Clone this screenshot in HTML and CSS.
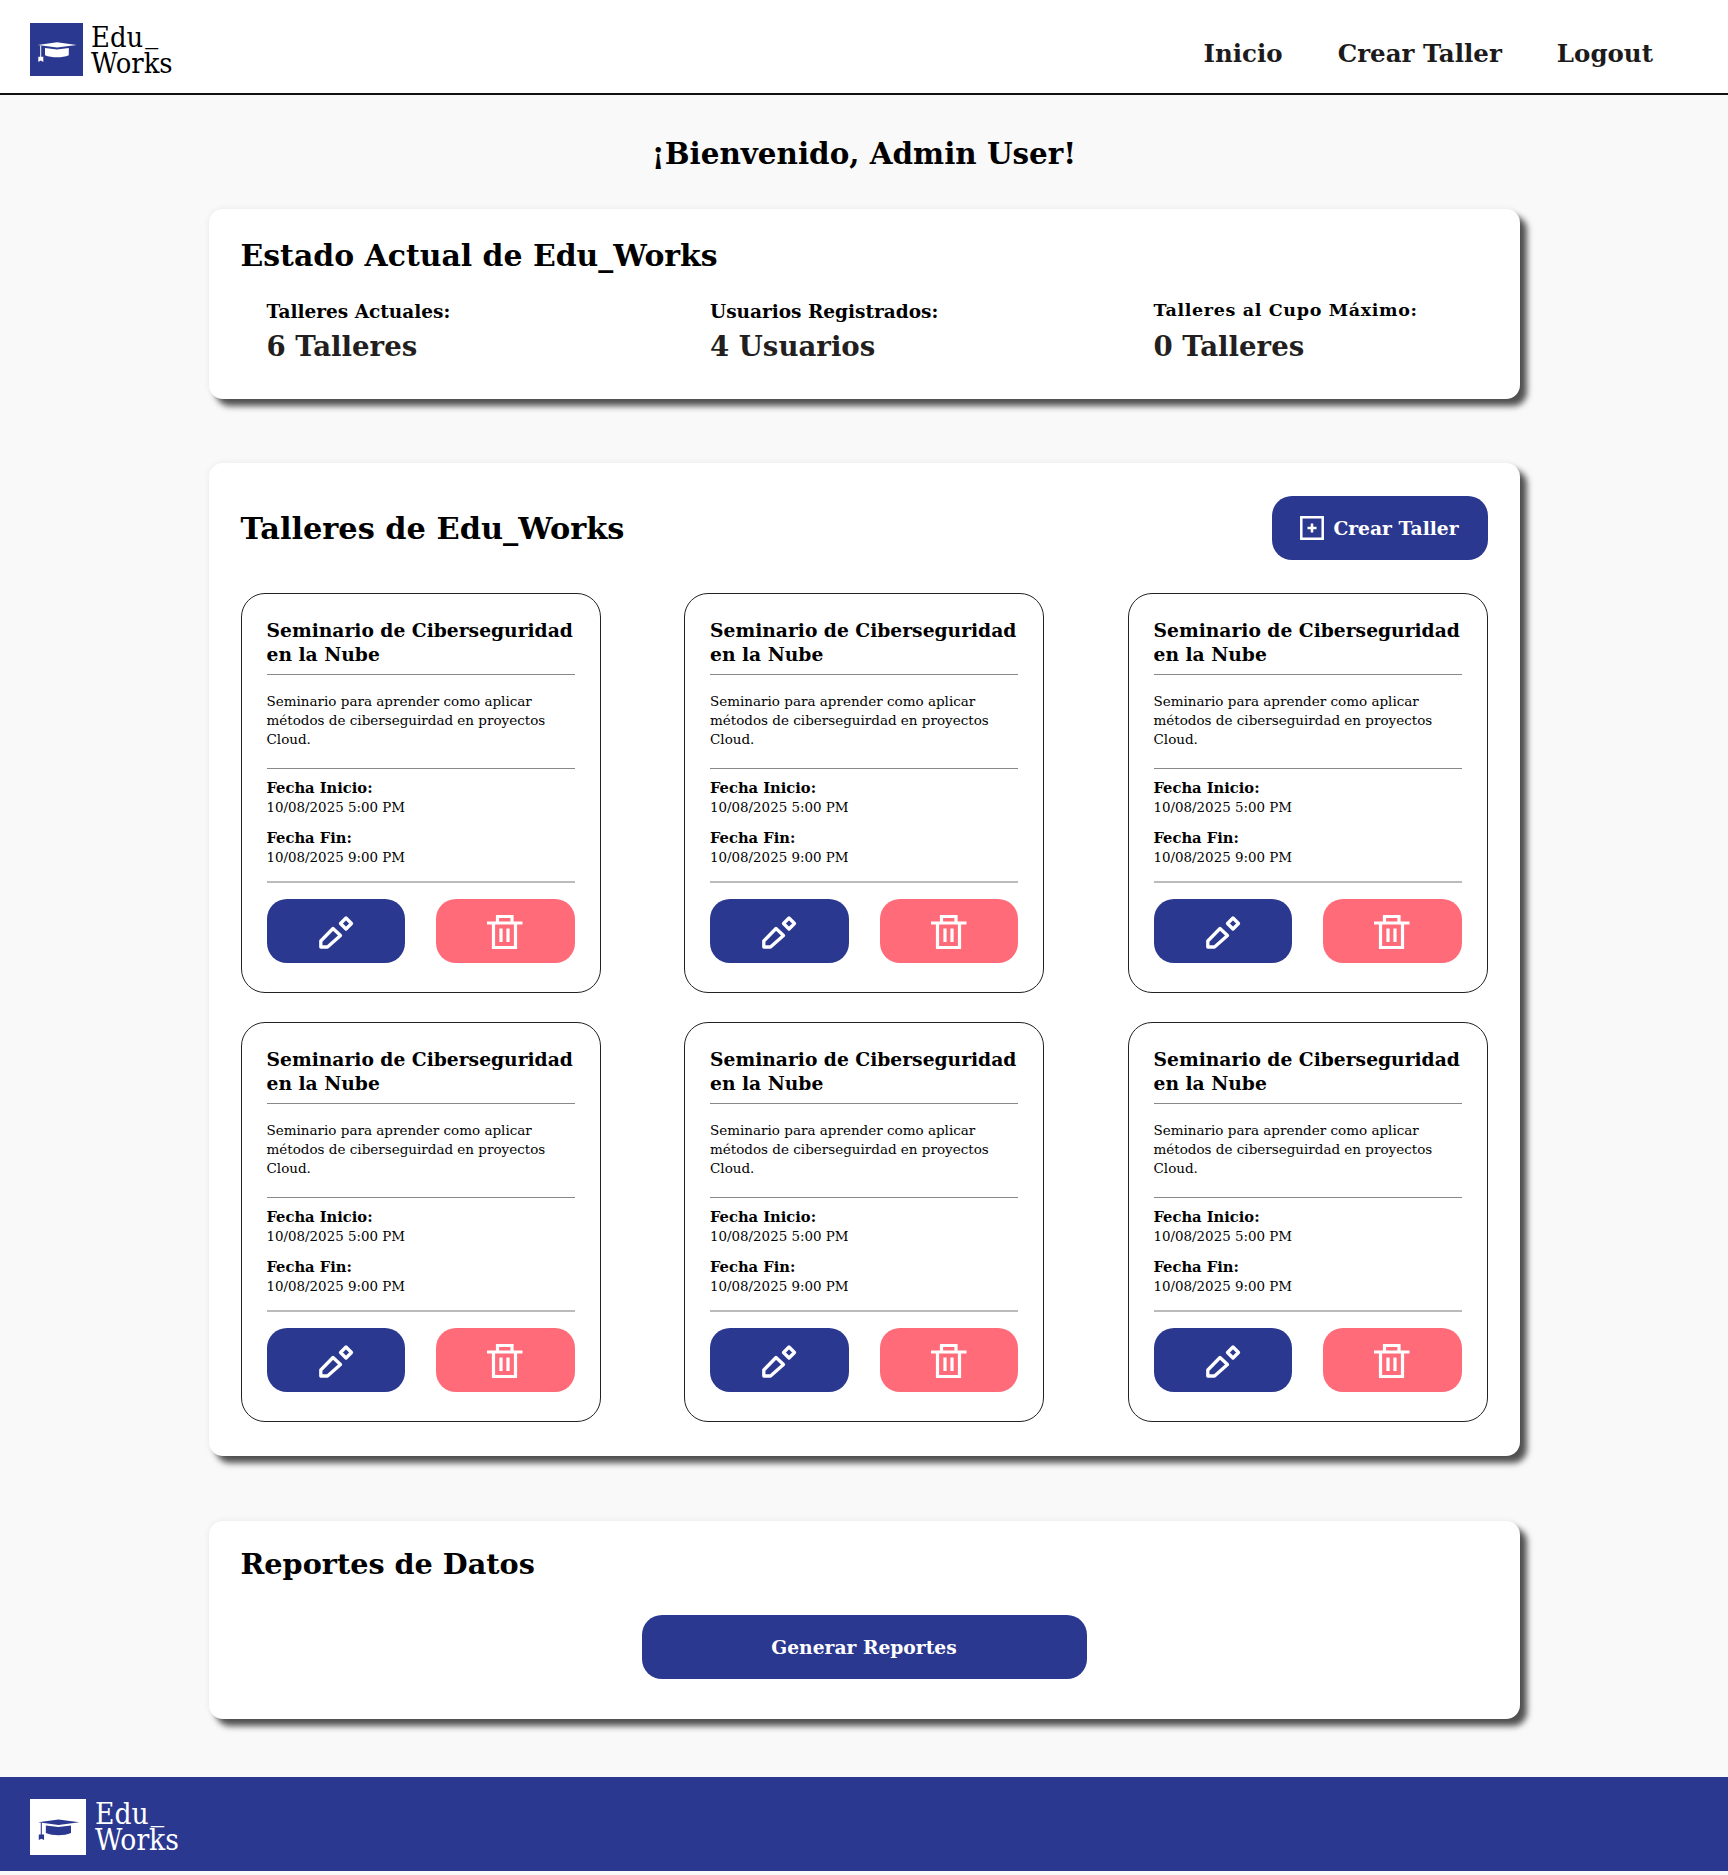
FILE: index.html
```html
<!DOCTYPE html>
<html lang="es">
<head>
  <meta charset="UTF-8" />
  <meta name="viewport" content="width=device-width, initial-scale=1.0" />
  <title>Edu_Works | Admin</title>
  <link rel="stylesheet" href="styles.css">
</head>
<body>
  <svg class="icon-defs" aria-hidden="true">
    <symbol id="cap" viewBox="0 0 53 53">
      <path d="M7.7 22 27 19.3 46.7 22 27 24.6z"/>
      <path d="M15 25 27 26.6 38.8 25V32.2C32 35 22 35 15 32.2z"/>
      <path d="M10.2 22.5H11.2V33.7H13.3V38.9L10.8 37.6 8.3 38.9V33.7H10.2z"/>
    </symbol>
    <symbol id="pencil" viewBox="0 0 40 40">
      <path d="M4.8 36V30L17 17.5 24.5 24.5 11.5 36z" fill="none" stroke="currentColor" stroke-width="3.3" stroke-linejoin="round"/>
      <path d="M24.5 12.5 30 7 35.5 12.5 30 18z" fill="none" stroke="currentColor" stroke-width="3.3" stroke-linejoin="round"/>
    </symbol>
    <symbol id="trash" viewBox="0 0 40 40">
      <path d="M2 12H37.5M12.5 12V5.5H27V12M8.5 12V36.5H30.5V12M16 17.5V31M23 17.5V31" fill="none" stroke="currentColor" stroke-width="3.2"/>
    </symbol>
    <symbol id="plus-box" viewBox="0 0 24 24">
      <path d="M1.3 1.3H22.7V22.7H1.3zM7.5 12H16.5M12 7.5V16.5" fill="none" stroke="currentColor" stroke-width="2.5"/>
    </symbol>
  </svg>

  <header class="topbar">
    <a class="brand" href="#">
      <span class="brand-mark"><svg class="brand-cap"><use href="#cap"/></svg></span>
      <span class="brand-name"><span class="brand-line">Edu<span class="brand-us">_</span></span><span class="brand-line">Works</span></span>
    </a>
    <nav class="topnav">
      <a href="#">Inicio</a>
      <a href="#">Crear Taller</a>
      <a href="#">Logout</a>
    </nav>
  </header>

  <main class="content">
    <h1 class="welcome">¡Bienvenido, Admin User!</h1>

    <section class="panel panel-status">
      <h2>Estado Actual de Edu_Works</h2>
      <div class="stats">
        <div><p class="stat-label">Talleres Actuales:</p><p class="stat-value">6 Talleres</p></div>
        <div><p class="stat-label">Usuarios Registrados:</p><p class="stat-value">4 Usuarios</p></div>
        <div><p class="stat-label stat-label-wide">Talleres al Cupo Máximo:</p><p class="stat-value">0 Talleres</p></div>
      </div>
    </section>

    <section class="panel panel-workshops">
      <div class="panel-head">
        <h2>Talleres de Edu_Works</h2>
        <button class="btn btn-create"><svg class="plus-icon"><use href="#plus-box"/></svg>Crear Taller</button>
      </div>
      <div class="workshop-grid">
        <article class="workshop">
          <h3>Seminario de Ciberseguridad en la Nube</h3>
          <p class="workshop-desc">Seminario para aprender como aplicar métodos de ciberseguirdad en proyectos Cloud.</p>
          <div class="workshop-dates">
            <p><strong>Fecha Inicio:</strong>10/08/2025 5:00 PM</p>
            <p><strong>Fecha Fin:</strong>10/08/2025 9:00 PM</p>
          </div>
          <div class="workshop-actions">
            <button class="btn btn-edit"><svg class="action-icon"><use href="#pencil"/></svg></button>
            <button class="btn btn-delete"><svg class="action-icon"><use href="#trash"/></svg></button>
          </div>
        </article>
        <article class="workshop">
          <h3>Seminario de Ciberseguridad en la Nube</h3>
          <p class="workshop-desc">Seminario para aprender como aplicar métodos de ciberseguirdad en proyectos Cloud.</p>
          <div class="workshop-dates">
            <p><strong>Fecha Inicio:</strong>10/08/2025 5:00 PM</p>
            <p><strong>Fecha Fin:</strong>10/08/2025 9:00 PM</p>
          </div>
          <div class="workshop-actions">
            <button class="btn btn-edit"><svg class="action-icon"><use href="#pencil"/></svg></button>
            <button class="btn btn-delete"><svg class="action-icon"><use href="#trash"/></svg></button>
          </div>
        </article>
        <article class="workshop">
          <h3>Seminario de Ciberseguridad en la Nube</h3>
          <p class="workshop-desc">Seminario para aprender como aplicar métodos de ciberseguirdad en proyectos Cloud.</p>
          <div class="workshop-dates">
            <p><strong>Fecha Inicio:</strong>10/08/2025 5:00 PM</p>
            <p><strong>Fecha Fin:</strong>10/08/2025 9:00 PM</p>
          </div>
          <div class="workshop-actions">
            <button class="btn btn-edit"><svg class="action-icon"><use href="#pencil"/></svg></button>
            <button class="btn btn-delete"><svg class="action-icon"><use href="#trash"/></svg></button>
          </div>
        </article>
        <article class="workshop">
          <h3>Seminario de Ciberseguridad en la Nube</h3>
          <p class="workshop-desc">Seminario para aprender como aplicar métodos de ciberseguirdad en proyectos Cloud.</p>
          <div class="workshop-dates">
            <p><strong>Fecha Inicio:</strong>10/08/2025 5:00 PM</p>
            <p><strong>Fecha Fin:</strong>10/08/2025 9:00 PM</p>
          </div>
          <div class="workshop-actions">
            <button class="btn btn-edit"><svg class="action-icon"><use href="#pencil"/></svg></button>
            <button class="btn btn-delete"><svg class="action-icon"><use href="#trash"/></svg></button>
          </div>
        </article>
        <article class="workshop">
          <h3>Seminario de Ciberseguridad en la Nube</h3>
          <p class="workshop-desc">Seminario para aprender como aplicar métodos de ciberseguirdad en proyectos Cloud.</p>
          <div class="workshop-dates">
            <p><strong>Fecha Inicio:</strong>10/08/2025 5:00 PM</p>
            <p><strong>Fecha Fin:</strong>10/08/2025 9:00 PM</p>
          </div>
          <div class="workshop-actions">
            <button class="btn btn-edit"><svg class="action-icon"><use href="#pencil"/></svg></button>
            <button class="btn btn-delete"><svg class="action-icon"><use href="#trash"/></svg></button>
          </div>
        </article>
        <article class="workshop">
          <h3>Seminario de Ciberseguridad en la Nube</h3>
          <p class="workshop-desc">Seminario para aprender como aplicar métodos de ciberseguirdad en proyectos Cloud.</p>
          <div class="workshop-dates">
            <p><strong>Fecha Inicio:</strong>10/08/2025 5:00 PM</p>
            <p><strong>Fecha Fin:</strong>10/08/2025 9:00 PM</p>
          </div>
          <div class="workshop-actions">
            <button class="btn btn-edit"><svg class="action-icon"><use href="#pencil"/></svg></button>
            <button class="btn btn-delete"><svg class="action-icon"><use href="#trash"/></svg></button>
          </div>
        </article>
      </div>
    </section>

    <section class="panel panel-reports">
      <h2>Reportes de Datos</h2>
      <button class="btn btn-report">Generar Reportes</button>
    </section>
  </main>

  <footer class="footer">
    <a class="brand brand-footer" href="#">
      <span class="brand-mark"><svg class="brand-cap"><use href="#cap"/></svg></span>
      <span class="brand-name"><span class="brand-line">Edu<span class="brand-us">_</span></span><span class="brand-line">Works</span></span>
    </a>
  </footer>
</body>
</html>
```

FILE: styles.css
```css
* {
  box-sizing: border-box;
}
body {
  margin: 0;
  background-color: #f9f9f9;
  color: #000;
  font-family: "DejaVu Serif", "Liberation Serif", serif;
}
h1, h2, h3, p {
  margin: 0;
}
a {
  color: inherit;
  text-decoration: none;
}
.icon-defs {
  display: none;
}

/* header */
.topbar {
  display: flex;
  justify-content: space-between;
  align-items: center;
  height: 95px;
  padding: 6px 75px 0 30px;
  background: #fff;
  border-bottom: 2px solid #111;
}
.brand {
  display: flex;
  align-items: center;
  gap: 8px;
}
.brand-mark {
  display: block;
  width: 53px;
  height: 53px;
  background: #2b388f;
  color: #fff;
}
.brand-cap {
  display: block;
  width: 100%;
  height: 100%;
  fill: currentColor;
}
.brand-name {
  display: block;
  font-size: 28.8px;
  font-stretch: condensed;
}
.brand-line {
  display: block;
  height: 26px;
  line-height: 26px;
}
.brand-us {
  margin-left: 2px;
  line-height: 0;
  vertical-align: 4px;
}
.topnav {
  display: flex;
  gap: 55px;
  padding-top: 8px;
  font-size: 24.5px;
  font-weight: 700;
  color: #1c1a1b;
}

/* main */
.content {
  padding-top: 39px;
}
.welcome {
  margin-bottom: 35px;
  font-size: 29.4px;
  line-height: 40px;
  text-align: center;
}
.panel {
  width: 1311px;
  margin: 0 auto 64px;
  padding: 27px 32px 34px;
  background: #fff;
  border-radius: 14px;
  box-shadow: 7px 7px 6px rgba(0, 0, 0, 0.68), 0 0 6px rgba(0, 0, 0, 0.07);
}
.panel h2 {
  font-size: 29.9px;
  line-height: 40px;
}
.panel-workshops h2 {
  font-size: 30.4px;
}
.panel-reports h2 {
  font-size: 28.7px;
}
.stats {
  display: grid;
  grid-template-columns: 443.5px 443.5px 1fr;
  margin-top: 24px;
  padding-left: 26px;
}
.stat-label {
  font-size: 18.5px;
  line-height: 24px;
  font-weight: 700;
}
.stat-label-wide {
  margin-top: -2px;
  padding-bottom: 2px;
  font-size: 17.5px;
  letter-spacing: 0.65px;
}
.stat-value {
  margin-top: 5px;
  font-size: 27.6px;
  line-height: 36px;
  font-weight: 700;
  color: #231f20;
}

/* talleres */
.panel-workshops {
  margin-bottom: 65px;
  padding-top: 33px;
  padding-bottom: 34px;
}
.panel-head {
  display: flex;
  justify-content: space-between;
  align-items: center;
  margin-bottom: 33px;
}
.btn {
  display: flex;
  justify-content: center;
  align-items: center;
  height: 64px;
  padding: 0;
  border: 0;
  border-radius: 20px;
  color: #fff;
  font-family: inherit;
  font-weight: 700;
  font-size: 18.7px;
}
.btn-create {
  gap: 9px;
  width: 216px;
  background: #2b388f;
}
.plus-icon {
  width: 24px;
  height: 24px;
}
.workshop-grid {
  display: grid;
  grid-template-columns: repeat(3, 360px);
  justify-content: space-between;
  gap: 29px 0;
}
.workshop {
  height: 400px;
  padding: 24px 25px 0;
  border: 1px solid #222;
  border-radius: 24px;
}
.workshop h3 {
  padding-bottom: 8px;
  border-bottom: 1px solid #888;
  font-size: 18.7px;
  line-height: 24px;
}
.workshop-desc {
  padding: 17px 0 19px;
  border-bottom: 1px solid #888;
  font-size: 13.5px;
  line-height: 19px;
}
.workshop-dates {
  padding: 9px 0 13px;
  border-bottom: 2px solid #bbb;
  font-size: 13.4px;
  line-height: 20px;
}
.workshop-dates p + p {
  margin-top: 10px;
}
.workshop-dates strong {
  display: block;
  font-size: 14.7px;
}
.workshop-actions {
  display: grid;
  grid-template-columns: 138.5px 138.5px;
  justify-content: space-between;
  margin-top: 16px;
}
.btn-edit {
  background: #2b388f;
}
.btn-delete {
  background: #ff6b78;
}
.action-icon {
  width: 40px;
  height: 40px;
}

/* reportes */
.panel-reports {
  margin-bottom: 58px;
  padding-top: 23px;
  padding-bottom: 40px;
}
.btn-report {
  width: 445px;
  margin: 31px auto 0;
  background: #2b388f;
}

/* footer */
.footer {
  height: 94px;
  padding: 22px 30px 0;
  margin-bottom: 4px;
  background: #2b388f;
}
.brand-footer {
  gap: 9px;
  color: #fff;
}
.brand-footer .brand-mark {
  width: 56px;
  height: 56px;
  background: #fff;
  color: #2b388f;
}
.brand-footer .brand-name {
  font-size: 29.6px;
}
```
